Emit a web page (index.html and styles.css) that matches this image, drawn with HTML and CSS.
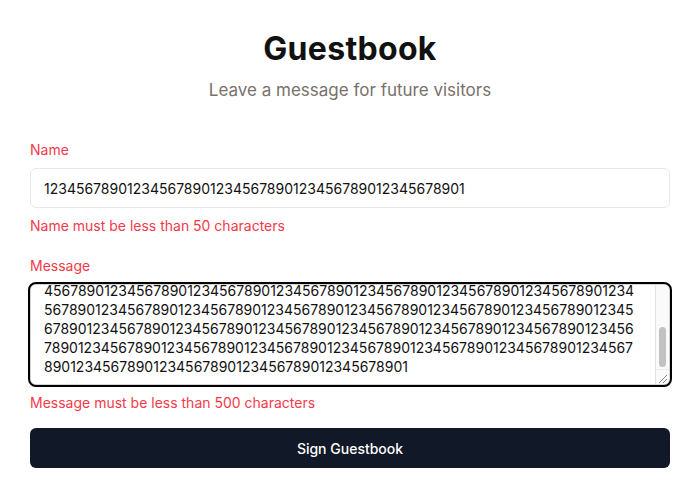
FILE: index.html
```html
<!DOCTYPE html>
<html lang="en">
<head>
<meta charset="utf-8">
<title>Guestbook</title>
<link rel="stylesheet" href="styles.css">
</head>
<body>
<main class="page">
  <header class="header">
    <h1 class="title">Guestbook</h1>
    <p class="subtitle">Leave a message for future visitors</p>
  </header>
  <form class="form">
    <div class="field">
      <label class="label" for="name">Name</label>
      <input class="input" id="name" type="text" value="123456789012345678901234567890123456789012345678901">
      <p class="error">Name must be less than 50 characters</p>
    </div>
    <div class="field">
      <label class="label" for="message">Message</label>
      <div class="ta-wrap">
        <textarea class="textarea" id="message">1234567890123456789012345678901234567890123456789012345678901234567890123456789012345678901234567890123456789012345678901234567890123456789012345678901234567890123456789012345678901234567890123456789012345678901234567890123456789012345678901234567890123456789012345678901234567890123456789012345678901234567890123456789012345678901234567890123456789012345678901234567890123456789012345678901234567890123456789012345678901234567890123456789012345678901234567890123456789012345678901234567890123456789012345678901234567890123456789012345678901</textarea>
        <div class="scrollbar" aria-hidden="true">
          <div class="scroll-track"><div class="scroll-thumb"></div></div>
          <div class="scroll-corner">
            <svg width="13" height="14" viewBox="0 0 13 14"><path d="M3 13 L11 5 M7 13 L11 9" stroke="#8a8a8a" stroke-width="1" fill="none"/></svg>
          </div>
        </div>
      </div>
      <p class="error">Message must be less than 500 characters</p>
    </div>
    <button class="button" type="button">Sign Guestbook</button>
  </form>
</main>
<script>
  var ta = document.getElementById('message');
  ta.scrollTop = ta.scrollHeight;
</script>
</body>
</html>
```

FILE: styles.css
```css
* { box-sizing: border-box; }
html, body { margin: 0; padding: 0; background: #fff; }
body {
  font-family: Inter, "Noto Sans", sans-serif;
  color: #111;
}
.page {
  width: 640px;
  margin: 0 auto;
  padding-top: 30px;
}
.header {
  text-align: center;
  margin-bottom: 36px;
}
.title {
  margin: 0;
  font-size: 32px;
  line-height: 38px;
  font-weight: 700;
  color: #111;
  letter-spacing: 0.3px;
}
.subtitle {
  margin: 8px 0 0;
  font-size: 17px;
  line-height: 28px;
  color: #78716c;
}
.form {
  display: flex;
  flex-direction: column;
}
.field {
  display: flex;
  flex-direction: column;
  gap: 8px;
  margin-bottom: 20px;
}
.field + .field { margin-bottom: 15px; }
.label {
  font-size: 14px;
  line-height: 20px;
  color: #f5394a;
}
.input {
  height: 40px;
  width: 100%;
  border: 1px solid #e5e7eb;
  border-radius: 6px;
  padding: 0 12px 0 13px;
  font-family: inherit;
  font-size: 14px;
  color: #111;
  background: #fff;
  outline: none;
}
.ta-wrap {
  position: relative;
  border-radius: 6px;
  outline: 2px solid #000;
}
.textarea {
  display: block;
  width: 100%;
  height: 101px;
  border: 1px solid #d4d4d4;
  border-radius: 6px;
  outline: none;
  padding: 8px 31px 8px 13px;
  font-family: inherit;
  font-size: 14px;
  line-height: 19px;
  color: #111;
  background: #fff;
  resize: none;
  word-break: break-all;
  overflow-y: scroll;
}
.scrollbar {
  position: absolute;
  top: 1px;
  right: 1px;
  bottom: 1px;
  width: 14px;
  display: flex;
  flex-direction: column;
  background: #fafafa;
  border-left: 1px solid #e4e4e4;
  border-radius: 0 5px 5px 0;
  pointer-events: none;
}
.scroll-track {
  flex: 1;
  display: flex;
  flex-direction: column;
  justify-content: flex-end;
  align-items: center;
  padding-bottom: 2px;
}
.scroll-thumb {
  width: 7px;
  height: 40px;
  border-radius: 4px;
  background: #c1c1c1;
}
.scroll-corner {
  height: 15px;
  border-top: 1px solid #ececec;
  display: flex;
  justify-content: flex-end;
  align-items: flex-end;
}
.scroll-corner svg { display: block; }
.error {
  margin: 0;
  font-size: 14px;
  line-height: 20px;
  color: #f5394a;
}
.button {
  height: 40px;
  width: 100%;
  border: none;
  border-radius: 6px;
  background: #111827;
  color: #fff;
  font-family: inherit;
  font-size: 14px;
  font-weight: 500;
}
```
